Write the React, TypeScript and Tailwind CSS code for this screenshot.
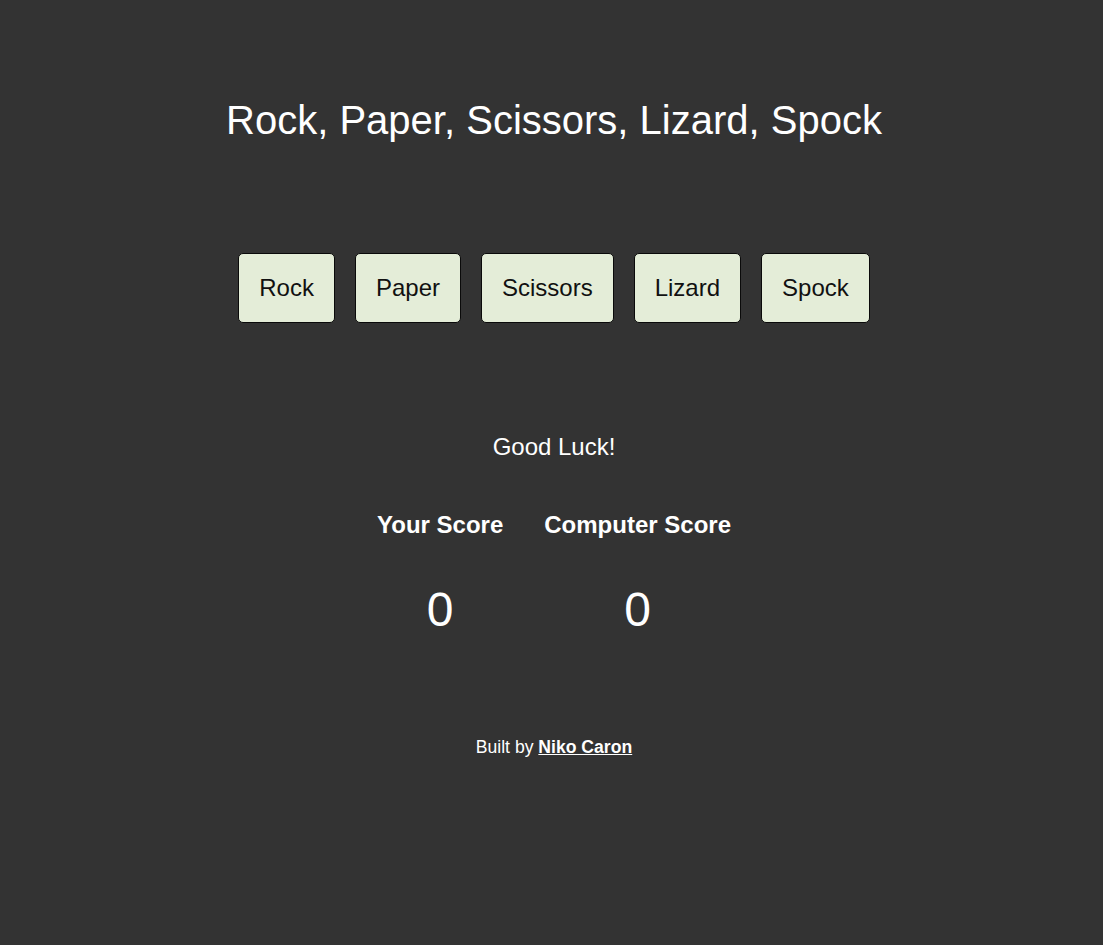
import React from "react";

const choices = ["Rock", "Paper", "Scissors", "Lizard", "Spock"];

export default function App() {
  return (
    <div
      className="min-h-[945px] w-full bg-[#333333] text-white pl-[5px]"
      style={{ fontFamily: '"Liberation Sans", Arial, sans-serif' }}
    >
      <div className="flex flex-col items-center pt-[97px]">
        <h1 className="text-[40px] leading-[46px] font-normal">
          Rock, Paper, Scissors, Lizard, Spock
        </h1>

        <div className="mt-[110px] flex gap-5">
          {choices.map((c) => (
            <button
              key={c}
              className="rounded-[5px] border border-[#0a0a0a] bg-[#e4edd8] px-5 py-5 text-[24px] leading-[28px] text-[#111111]"
            >
              {c}
            </button>
          ))}
        </div>

        <p className="mt-[110px] text-[24px] leading-[28px]">Good Luck!</p>

        <div className="mt-[50px] flex gap-[41px]">
          <div className="flex flex-col items-center">
            <h2 className="text-[24px] leading-[28px] font-bold">Your Score</h2>
            <div className="mt-[43px] text-[48px] leading-[55px]">0</div>
          </div>
          <div className="flex flex-col items-center">
            <h2 className="text-[24px] leading-[28px] font-bold">Computer Score</h2>
            <div className="mt-[43px] text-[48px] leading-[55px]">0</div>
          </div>
        </div>

        <p className="mt-[100px] text-[17.6px] leading-[20px]">
          Built by{" "}
          <a href="#" className="font-bold underline text-white">
            Niko Caron
          </a>
        </p>
      </div>
    </div>
  );
}
